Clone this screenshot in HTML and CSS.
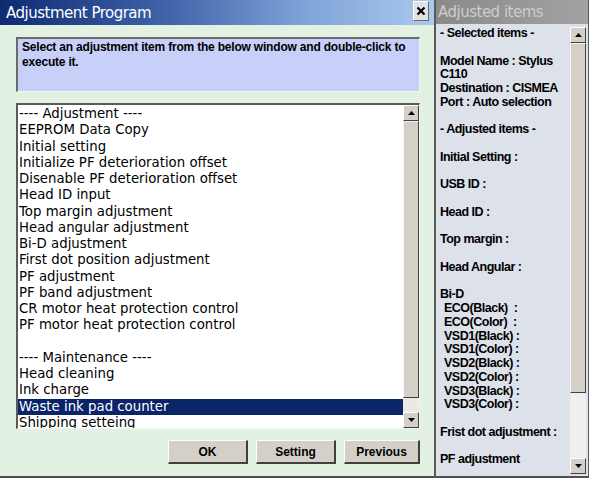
FILE: index.html
```html
<!DOCTYPE html>
<html>
<head>
<meta charset="utf-8">
<link rel="stylesheet" href="styles.css">
</head>
<body>
<div class="screen">
  <div class="dialog">
    <div class="titlebar">
      <span class="title">Adjustment Program</span>
      <div class="close"><svg width="10" height="10" viewBox="0 0 10 10"><path d="M1.5 1.5 L8.5 8.5 M8.5 1.5 L1.5 8.5" stroke="#000" stroke-width="2.2" fill="none"/></svg></div>
    </div>
    <div class="dbody">
      <div class="instr">Select an adjustment item from the below window and double-click to<br>execute it.</div>
      <div class="listbox">
        <div class="items">
          <div class="item">---- Adjustment ----</div>
          <div class="item">EEPROM Data Copy</div>
          <div class="item">Initial setting</div>
          <div class="item">Initialize PF deterioration offset</div>
          <div class="item">Disenable PF deterioration offset</div>
          <div class="item">Head ID input</div>
          <div class="item">Top margin adjustment</div>
          <div class="item">Head angular adjustment</div>
          <div class="item">Bi-D adjustment</div>
          <div class="item">First dot position adjustment</div>
          <div class="item">PF adjustment</div>
          <div class="item">PF band adjustment</div>
          <div class="item">CR motor heat protection control</div>
          <div class="item">PF motor heat protection control</div>
          <div class="item"></div>
          <div class="item">---- Maintenance ----</div>
          <div class="item">Head cleaning</div>
          <div class="item">Ink charge</div>
          <div class="item sel">Waste ink pad counter</div>
          <div class="item">Shipping setteing</div>
        </div>
        <div class="vscroll list-scroll">
          <div class="sbtn"><svg width="7" height="4" viewBox="0 0 7 4"><path d="M3.5 0 L7 4 L0 4 Z" fill="#000"/></svg></div>
          <div class="thumb"></div>
          <div class="track"></div>
          <div class="sbtn"><svg width="7" height="4" viewBox="0 0 7 4"><path d="M0 0 L7 0 L3.5 4 Z" fill="#000"/></svg></div>
        </div>
      </div>
      <div class="buttons">
        <div class="btn">OK</div>
        <div class="btn">Setting</div>
        <div class="btn btn-prev">Previous</div>
      </div>
    </div>
  </div>
  <div class="side">
    <div class="side-title">Adjusted items</div>
    <div class="side-body">
      <div class="side-text">
        <div class="ln">- Selected items -</div>
        <div class="ln"></div>
        <div class="ln">Model Name : Stylus</div>
        <div class="ln">C110</div>
        <div class="ln">Destination : CISMEA</div>
        <div class="ln">Port : Auto selection</div>
        <div class="ln"></div>
        <div class="ln">- Adjusted items -</div>
        <div class="ln"></div>
        <div class="ln">Initial Setting :</div>
        <div class="ln"></div>
        <div class="ln">USB ID :</div>
        <div class="ln"></div>
        <div class="ln">Head ID :</div>
        <div class="ln"></div>
        <div class="ln">Top margin :</div>
        <div class="ln"></div>
        <div class="ln">Head Angular :</div>
        <div class="ln"></div>
        <div class="ln">Bi-D</div>
        <div class="ln ind">ECO(Black)  :</div>
        <div class="ln ind">ECO(Color)  :</div>
        <div class="ln ind">VSD1(Black) :</div>
        <div class="ln ind">VSD1(Color) :</div>
        <div class="ln ind">VSD2(Black) :</div>
        <div class="ln ind">VSD2(Color) :</div>
        <div class="ln ind">VSD3(Black) :</div>
        <div class="ln ind">VSD3(Color) :</div>
        <div class="ln"></div>
        <div class="ln">Frist dot adjustment :</div>
        <div class="ln"></div>
        <div class="ln">PF adjustment</div>
      </div>
      <div class="vscroll side-scroll">
        <div class="sbtn"><svg width="7" height="4" viewBox="0 0 7 4"><path d="M3.5 0 L7 4 L0 4 Z" fill="#000"/></svg></div>
        <div class="thumb"></div>
        <div class="track"></div>
        <div class="sbtn"><svg width="7" height="4" viewBox="0 0 7 4"><path d="M0 0 L7 0 L3.5 4 Z" fill="#000"/></svg></div>
      </div>
    </div>
  </div>
</div>
</body>
</html>
```

FILE: styles.css
```css
html, body {
  margin: 0;
  padding: 0;
  background: #ffffff;
}
body {
  width: 600px;
  height: 480px;
  overflow: hidden;
  font-family: "Liberation Sans", Arial, sans-serif;
}
.screen {
  display: flex;
  height: 480px;
  align-items: flex-start;
}

/* ---------- left dialog ---------- */
.dialog {
  width: 434px;
  height: 478px;
  box-sizing: border-box;
  background: #e3f1e3;
  border-bottom: 2px solid #505050;
  display: flex;
  flex-direction: column;
  flex: none;
}
.titlebar {
  height: 25px;
  flex: none;
  display: flex;
  align-items: center;
  padding-left: 6px;
  background: linear-gradient(to right, #0e2b72 0%, #3f62a8 38%, #7fa3d8 70%, #aac9ee 100%);
}
.title {
  color: #ffffff;
  font-family: "DejaVu Sans", sans-serif;
  font-size: 15px;
  letter-spacing: -0.5px;
}
.close {
  margin-left: auto;
  margin-right: 5px;
  align-self: flex-start;
  margin-top: 1px;
  width: 16px;
  height: 20px;
  box-sizing: border-box;
  background: #e2e2e2;
  border: 1px solid;
  border-color: #ffffff #6a6a6a #6a6a6a #ffffff;
  display: flex;
  align-items: center;
  justify-content: center;
}
.dbody {
  flex: 1;
  padding: 12px 14px 0 16px;
  display: flex;
  flex-direction: column;
}
.instr {
  height: 55px;
  box-sizing: border-box;
  background: #c8d0fa;
  border-top: 2px solid #6a6a6a;
  border-left: 2px solid #6a6a6a;
  border-right: 1px solid #f4f4f4;
  border-bottom: 1px solid #f4f4f4;
  padding: 1px 4px;
  font-weight: bold;
  font-size: 12px;
  letter-spacing: -0.2px;
  line-height: 15px;
  color: #000;
  white-space: nowrap;
}
.listbox {
  margin-top: 11px;
  height: 326px;
  box-sizing: border-box;
  background: #ffffff;
  border-top: 2px solid #5a5a5a;
  border-left: 2px solid #5a5a5a;
  border-right: 1px solid #f4f4f4;
  border-bottom: 1px solid #f4f4f4;
  display: flex;
  overflow: hidden;
}
.items {
  flex: 1;
  padding-top: 1px;
  overflow: hidden;
  font-family: "DejaVu Sans", sans-serif;
  font-size: 13.3px;
  line-height: 16.25px;
  color: #000;
}
.item {
  height: 16.25px;
  padding-left: 1px;
  white-space: nowrap;
}
.item.sel {
  background: #0a246a;
  color: #ffffff;
}

/* ---------- scrollbars ---------- */
.vscroll {
  width: 16px;
  flex: none;
  display: flex;
  flex-direction: column;
}
.sbtn {
  height: 16px;
  flex: none;
  box-sizing: border-box;
  background: #d4d0c8;
  border: 1px solid;
  border-color: #ffffff #404040 #404040 #ffffff;
  display: flex;
  align-items: center;
  justify-content: center;
}
.thumb {
  flex: none;
  box-sizing: border-box;
  background: #d4d0c8;
  border: 1px solid;
  border-color: #f4f4f4 #404040 #404040 #f4f4f4;
}
.track {
  flex: 1;
  background: #ebe9e4;
}
.list-scroll .thumb {
  height: 277px;
}
.side-scroll {
  margin: 3px 2px 2px 0;
}
.side-scroll .thumb {
  height: 350px;
}
.side-scroll .track {
  background: #efefef;
}

/* ---------- buttons ---------- */
.buttons {
  margin-top: 11px;
  display: flex;
  justify-content: flex-end;
  gap: 8px;
}
.btn {
  width: 80px;
  height: 24px;
  box-sizing: border-box;
  background: #d4d0c8;
  border-top: 1px solid #ffffff;
  border-left: 1px solid #ffffff;
  border-right: 2px solid #404040;
  border-bottom: 2px solid #404040;
  display: flex;
  align-items: center;
  justify-content: center;
  font-weight: bold;
  font-size: 12px;
  color: #000;
}
.btn-prev {
  width: 76px;
}

/* ---------- right panel ---------- */
.side {
  width: 155px;
  height: 478px;
  flex: none;
  box-sizing: border-box;
  border-left: 2px solid #5a5a5a;
  border-right: 1px solid #5a5a5a;
  border-bottom: 2px solid #505050;
  display: flex;
  flex-direction: column;
}
.side-title {
  height: 24px;
  flex: none;
  background: linear-gradient(to right, #8a8a8a, #a2a2a2);
  color: #cdcdcd;
  font-family: "DejaVu Sans", sans-serif;
  font-size: 15px;
  letter-spacing: -0.5px;
  line-height: 24px;
  padding-left: 2px;
  white-space: nowrap;
}
.side-body {
  flex: 1;
  display: flex;
  background: #dde1ea;
  overflow: hidden;
}
.side-text {
  flex: 1;
  padding: 3px 0 0 4px;
  overflow: hidden;
  font-weight: bold;
  font-size: 12.5px;
  letter-spacing: -0.5px;
  line-height: 13.75px;
  color: #000;
}
.ln {
  height: 13.75px;
  white-space: pre;
}
.ln.ind {
  padding-left: 4px;
}
```
